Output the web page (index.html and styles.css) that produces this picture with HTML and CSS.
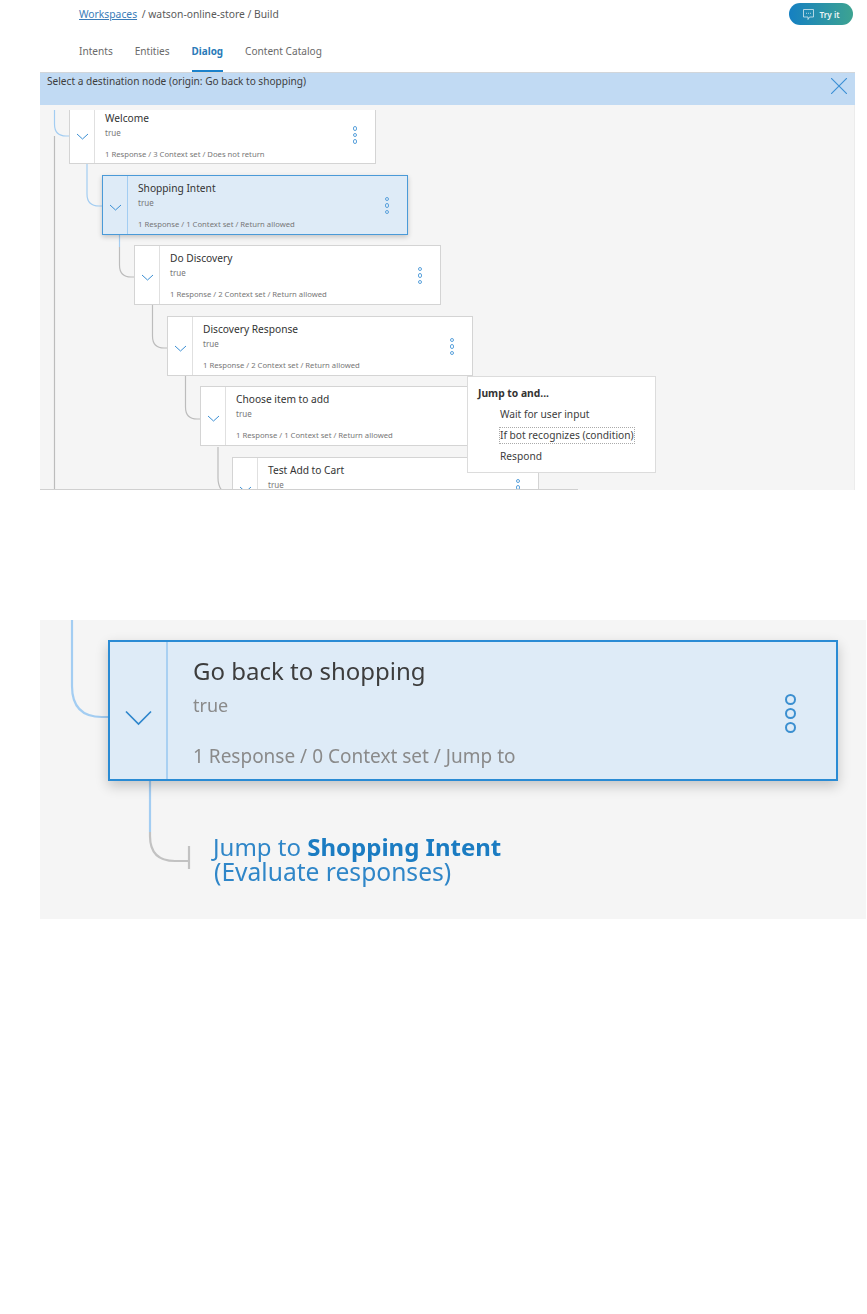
FILE: index.html
```html
<!DOCTYPE html>
<html lang="en">
<head>
    <meta charset="UTF-8">
    <meta name="viewport" content="width=device-width, initial-scale=1.0">
    <title>Watson Assistant - Build</title>
    <link rel="stylesheet" href="styles.css">
</head>
<body>

    <!-- Top bar -->
    <div class="topbar">
        <div class="breadcrumb">
            <a href="#">Workspaces</a>
            <span>/ watson-online-store / Build</span>
        </div>
        <button class="try-it">
            <svg width="13" height="13" viewBox="0 0 13 13" fill="none" stroke="#d5e9f0" stroke-width="0.8">
                <path d="M1.5 1.5H11.5V9H7.5L6 11.5V9H1.5Z"/>
                <path d="M4 5.3H5M6 5.3H7M8 5.3H9"/>
            </svg>
            Try it
        </button>
    </div>

    <!-- Tabs -->
    <nav class="tabs">
        <a href="#">Intents</a>
        <a href="#">Entities</a>
        <a href="#" class="active">Dialog</a>
        <a href="#">Content Catalog</a>
    </nav>

    <!-- Destination picker -->
    <div class="picker">
        <div class="banner">
            <span>Select a destination node (origin: Go back to shopping)</span>
            <svg class="close" width="16" height="16" viewBox="0 0 16 16" fill="none" stroke="#3b8fd4" stroke-width="1.1">
                <path d="M0 0L16 16M16 0L0 16"/>
            </svg>
        </div>
        <div class="canvas">
            <div class="tree">
                <svg class="wires" width="538" height="379" viewBox="0 0 538 379" fill="none" stroke-width="1.2">
                    <path stroke="#bcbcbc" d="M14.5 26V379"/>
                    <path stroke="#a3cdf2" d="M14.5 0V14Q14.5 26 26 26H29"/>
                    <path stroke="#a3cdf2" d="M47 54V84Q47 96 59 96H62"/>
                    <path stroke="#a3cdf2" d="M79.5 124V137"/>
                    <path stroke="#bcbcbc" d="M79.5 137V155Q79.5 167 91 167H94"/>
                    <path stroke="#bcbcbc" d="M112.5 195V226Q112.5 238 124 238H127"/>
                    <path stroke="#bcbcbc" d="M145.5 266V297Q145.5 309 157 309H160"/>
                    <path stroke="#bcbcbc" d="M178 337V368Q178 379 186 384"/>
                </svg>

                <div class="node n1">
                    <div class="toggle"><svg width="13" height="7" viewBox="0 0 13 7" fill="none" stroke="#3b8fd4"><path d="M1 1L6.5 6L12 1"/></svg></div>
                    <div class="body">
                        <div class="name">Welcome</div>
                        <div class="cond">true</div>
                        <div class="meta">1 Response / 3 Context set / Does not return</div>
                    </div>
                    <div class="dots"><i></i><i></i><i></i></div>
                </div>

                <div class="node selected n2">
                    <div class="toggle"><svg width="13" height="7" viewBox="0 0 13 7" fill="none" stroke="#3b8fd4"><path d="M1 1L6.5 6L12 1"/></svg></div>
                    <div class="body">
                        <div class="name">Shopping Intent</div>
                        <div class="cond">true</div>
                        <div class="meta">1 Response / 1 Context set / Return allowed</div>
                    </div>
                    <div class="dots"><i></i><i></i><i></i></div>
                </div>

                <div class="node n3">
                    <div class="toggle"><svg width="13" height="7" viewBox="0 0 13 7" fill="none" stroke="#3b8fd4"><path d="M1 1L6.5 6L12 1"/></svg></div>
                    <div class="body">
                        <div class="name">Do Discovery</div>
                        <div class="cond">true</div>
                        <div class="meta">1 Response / 2 Context set / Return allowed</div>
                    </div>
                    <div class="dots"><i></i><i></i><i></i></div>
                </div>

                <div class="node n4">
                    <div class="toggle"><svg width="13" height="7" viewBox="0 0 13 7" fill="none" stroke="#3b8fd4"><path d="M1 1L6.5 6L12 1"/></svg></div>
                    <div class="body">
                        <div class="name">Discovery Response</div>
                        <div class="cond">true</div>
                        <div class="meta">1 Response / 2 Context set / Return allowed</div>
                    </div>
                    <div class="dots"><i></i><i></i><i></i></div>
                </div>

                <div class="node n5">
                    <div class="toggle"><svg width="13" height="7" viewBox="0 0 13 7" fill="none" stroke="#3b8fd4"><path d="M1 1L6.5 6L12 1"/></svg></div>
                    <div class="body">
                        <div class="name">Choose item to add</div>
                        <div class="cond">true</div>
                        <div class="meta">1 Response / 1 Context set / Return allowed</div>
                    </div>
                    <div class="dots"><i></i><i></i><i></i></div>
                </div>

                <div class="node n6">
                    <div class="toggle"><svg width="13" height="7" viewBox="0 0 13 7" fill="none" stroke="#3b8fd4"><path d="M1 1L6.5 6L12 1"/></svg></div>
                    <div class="body">
                        <div class="name">Test Add to Cart</div>
                        <div class="cond">true</div>
                    </div>
                    <div class="dots"><i></i><i></i><i></i></div>
                </div>
            </div>

            <div class="jump-menu">
                <div class="jump-title">Jump to and...</div>
                <div class="jump-item">Wait for user input</div>
                <div class="jump-item focused">If bot recognizes (condition)</div>
                <div class="jump-item">Respond</div>
            </div>
        </div>
    </div>

    <!-- Zoomed node -->
    <div class="detail">
        <svg class="detail-wires" width="200" height="299" viewBox="0 0 200 299" fill="none" stroke-width="2.2">
            <path stroke="#a3cdf2" d="M32 0V66Q32 97 62 97H70"/>
            <path stroke="#a3cdf2" d="M110 160V212"/>
            <path stroke="#c2c2c2" d="M110 212V216Q110 241 135 241H149"/>
            <path stroke="#c2c2c2" d="M149 226V249"/>
        </svg>
        <div class="big-node">
            <div class="big-toggle"><svg width="27" height="16" viewBox="0 0 27 16" fill="none" stroke="#2f86cc" stroke-width="1.7"><path d="M1 1.5L13.5 14L26 1.5"/></svg></div>
            <div class="big-body">
                <div class="big-name">Go back to shopping</div>
                <div class="big-cond">true</div>
                <div class="big-meta">1 Response / 0 Context set / Jump to</div>
            </div>
            <div class="big-dots"><i></i><i></i><i></i></div>
        </div>
        <div class="jump-note">
            <div>Jump to <strong>Shopping Intent</strong></div>
            <div class="jump-note-sub">(Evaluate responses)</div>
        </div>
    </div>

</body>
</html>
```

FILE: styles.css
```css
/* Page */
body {
    font-family: "Noto Sans", Arial, sans-serif;
    background-color: white;
    color: #3d3d3d;
    margin: 0;
    padding: 0;
}

/* Top bar */
.topbar {
    display: flex;
    justify-content: space-between;
    align-items: flex-start;
    height: 25px;
    padding: 3px 14px 0 79px;
}

.breadcrumb {
    font-size: 10.3px;
    line-height: 22px;
    color: #5a5a5a;
}

.breadcrumb a {
    color: #3a7cb8;
    margin-right: 2px;
}

.try-it {
    display: flex;
    align-items: center;
    justify-content: center;
    gap: 4px;
    width: 64px;
    height: 22px;
    padding: 0;
    border: none;
    border-radius: 11px;
    background: linear-gradient(90deg, #1580c2, #3da391);
    color: #eef6f6;
    font-family: inherit;
    font-size: 8.2px;
    font-weight: 600;
}

/* Tabs */
.tabs {
    display: flex;
    gap: 22px;
    height: 44px;
    padding-left: 79px;
    box-sizing: border-box;
}

.tabs a {
    font-size: 10.1px;
    line-height: 16px;
    padding-top: 15px;
    color: #6a6a6a;
    text-decoration: none;
    box-sizing: border-box;
}

.tabs a.active {
    color: #2a7ab8;
    font-weight: 700;
    font-size: 9.9px;
    border-bottom: 2px solid #1b82cc;
}

/* Destination picker */
.picker {
    width: 815px;
    margin-left: 40px;
    height: 418px;
    background-color: #f5f5f5;
}

.banner {
    display: flex;
    justify-content: space-between;
    height: 33px;
    box-sizing: border-box;
    padding: 0 8px 0 7px;
    background-color: #c1daf3;
    border-top: 1px solid #d2d6da;
    font-size: 10.1px;
    line-height: 16px;
    color: #3d3d3d;
}

.close {
    margin-top: 5px;
}

.canvas {
    position: relative;
    height: 385px;
    padding-top: 5px;
    box-sizing: border-box;
    border-right: 1px solid #ececec;
}

.tree {
    position: relative;
    width: 538px;
    height: 379px;
    overflow: hidden;
    border-bottom: 1px solid #d0d0d0;
}

.wires {
    position: absolute;
    left: 0;
    top: 0;
}

/* Dialog nodes */
.node {
    position: absolute;
    display: flex;
    width: 307px;
    height: 60px;
    box-sizing: border-box;
    background-color: white;
    border: 1px solid #d4d4d4;
}

.n1 { left: 29px; top: -5px; height: 59px; }
.n2 { left: 62px; top: 65px; width: 306px; }
.n3 { left: 94px; top: 135px; }
.n4 { left: 127px; top: 206px; width: 306px; }
.n5 { left: 160px; top: 276px; }
.n6 { left: 192px; top: 347px; }

.node.selected {
    background-color: #deebf7;
    border-color: #4a9ad8;
    box-shadow: 0 2px 5px rgba(0, 0, 0, 0.2);
}

.toggle {
    display: flex;
    justify-content: center;
    align-items: center;
    flex: none;
    width: 25px;
    padding-top: 4px;
    box-sizing: border-box;
    border-right: 1px solid #e0e0e0;
}

.selected .toggle {
    border-right-color: #a3cdf2;
}

.body {
    flex: 1;
    padding: 5px 0 0 10px;
}

.name {
    font-size: 10.2px;
    line-height: 15px;
    color: #333;
}

.cond {
    font-size: 8px;
    line-height: 13px;
    color: #777;
}

.meta {
    font-size: 7.7px;
    line-height: 12px;
    margin-top: 9px;
    color: #777;
}

.dots {
    display: flex;
    flex-direction: column;
    justify-content: center;
    gap: 2px;
    padding-top: 1px;
    padding-right: 18px;
}

.dots i {
    width: 4.5px;
    height: 4.5px;
    box-sizing: border-box;
    border: 1px solid #5ba2dc;
    border-radius: 50%;
}

/* Jump to menu */
.jump-menu {
    position: absolute;
    left: 427px;
    top: 271px;
    width: 189px;
    height: 97px;
    box-sizing: border-box;
    padding: 8px 10px;
    background-color: white;
    border: 1px solid #dcdcdc;
}

.jump-title {
    font-size: 10.3px;
    font-weight: 700;
    line-height: 16px;
    margin-bottom: 5px;
    color: #333;
}

.jump-item {
    width: fit-content;
    margin-left: 22px;
    font-size: 10.2px;
    line-height: 15px;
    margin-top: 6px;
    color: #3d3d3d;
}

.jump-item.focused {
    outline: 1px dotted #aaa;
}

/* Zoomed node */
.detail {
    position: relative;
    width: 826px;
    height: 299px;
    margin: 130px 0 0 40px;
    padding: 20px 0 0 68px;
    box-sizing: border-box;
    background-color: #f5f5f5;
    filter: blur(0.4px);
}

.detail-wires {
    position: absolute;
    left: 0;
    top: 0;
}

.big-node {
    position: relative;
    display: flex;
    width: 730px;
    height: 141px;
    box-sizing: border-box;
    background-color: #deebf7;
    border: 2px solid #2a8bd4;
    box-shadow: 0 5px 12px rgba(0, 0, 0, 0.2);
}

.big-toggle {
    display: flex;
    justify-content: center;
    align-items: center;
    flex: none;
    width: 58px;
    padding-top: 15px;
    box-sizing: border-box;
    border-right: 2px solid #a9d0f2;
}

.big-body {
    flex: 1;
    padding: 13px 0 0 25px;
}

.big-name {
    font-size: 24px;
    line-height: 32px;
    color: #3d3d3d;
}

.big-cond {
    font-size: 18px;
    line-height: 24px;
    margin-top: 6px;
    color: #8a8a8a;
}

.big-meta {
    font-size: 19px;
    line-height: 26px;
    margin-top: 26px;
    color: #8a8a8a;
}

.big-dots {
    display: flex;
    flex-direction: column;
    justify-content: center;
    gap: 3px;
    padding-top: 6px;
    padding-right: 40px;
}

.big-dots i {
    width: 11px;
    height: 11px;
    box-sizing: border-box;
    border: 2.5px solid #3b8fd0;
    border-radius: 50%;
}

.jump-note {
    margin: 53px 0 0 105px;
    font-size: 24px;
    line-height: 25px;
    color: #2f86c8;
}

.jump-note-sub {
    margin-left: 1px;
    font-size: 24.6px;
}

.jump-note strong {
    color: #1b7cc2;
    font-weight: 700;
}
```
